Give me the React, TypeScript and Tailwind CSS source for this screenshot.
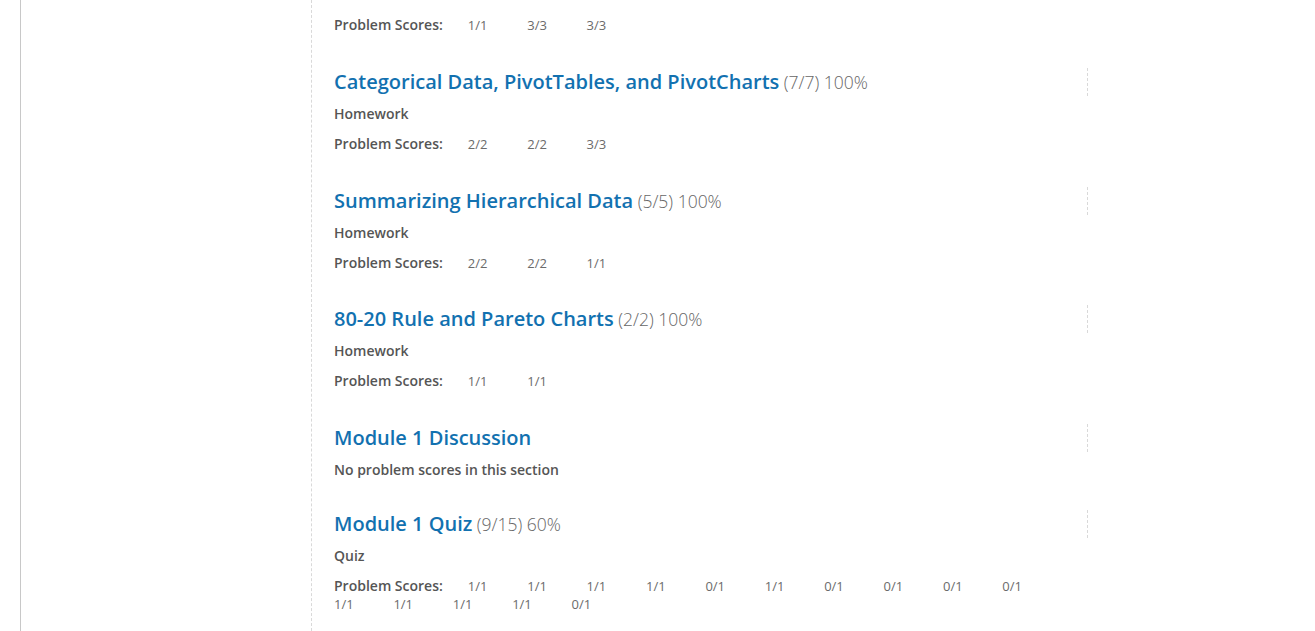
type Section = {
  title: string;
  score?: string;
  format?: string;
  scores?: string[];
};

const sections: Section[] = [
  {
    title: "Categorical Data, PivotTables, and PivotCharts",
    score: "(7/7) 100%",
    format: "Homework",
    scores: ["2/2", "2/2", "3/3"],
  },
  {
    title: "Summarizing Hierarchical Data",
    score: "(5/5) 100%",
    format: "Homework",
    scores: ["2/2", "2/2", "1/1"],
  },
  {
    title: "80-20 Rule and Pareto Charts",
    score: "(2/2) 100%",
    format: "Homework",
    scores: ["1/1", "1/1"],
  },
  {
    title: "Module 1 Discussion",
  },
  {
    title: "Module 1 Quiz",
    score: "(9/15) 60%",
    format: "Quiz",
    scores: [
      "1/1", "1/1", "1/1", "1/1", "0/1", "1/1", "0/1", "0/1", "0/1", "0/1",
      "1/1", "1/1", "1/1", "1/1", "0/1",
    ],
  },
];

function Scores({ scores }: { scores: string[] }) {
  return (
    <div className="mt-[11px] text-[13px] leading-[18px] text-[#6b6b6b]">
      <span className="mr-[25px] inline-block text-[14px] font-semibold text-[#555]">
        Problem Scores:
      </span>
      {scores.map((s, i) => (
        <span key={i} className="inline-block w-[59.4px]">
          {s}
        </span>
      ))}
    </div>
  );
}

export default function App() {
  return (
    <div
      className="h-[631px] overflow-hidden bg-white"
      style={{ fontFamily: '"Open Sans", "Noto Sans", sans-serif' }}
    >
      <div className="ml-[20px] flex h-full border-l border-[#c8c8c8]">
        {/* sidebar column, empty at this scroll position */}
        <div className="w-[290px] shrink-0" />

        <div className="h-full w-[777px] border-l border-dashed border-[#d9d9d9] pl-[22px]">
          {/* tail of the section above, cut off by the scroll */}
          <div className="-mt-[15px] mb-[34px]">
            <p className="text-[14px] font-semibold leading-[20px] text-[#555]">
              Homework
            </p>
            <Scores scores={["1/1", "3/3", "3/3"]} />
          </div>

          {sections.map((sec) => (
            <section
              key={sec.title}
              className={sec.scores ? "mb-[33.5px]" : "mb-[30px]"}
            >
              <h3 className="h-[28px] truncate border-r border-dashed border-[#d9d9d9] leading-[28px]">
                <span className="text-[20px] font-semibold text-[#1271b0]">
                  {sec.title}
                </span>
                {sec.score && (
                  <span className="text-[17.5px] font-light text-[#666]">
                    {" "}
                    {sec.score}
                  </span>
                )}
              </h3>
              <p className="mt-[8px] text-[14px] font-semibold leading-[20px] text-[#555]">
                {sec.format ?? "No problem scores in this section"}
              </p>
              {sec.scores && <Scores scores={sec.scores} />}
            </section>
          ))}
        </div>
      </div>
    </div>
  );
}
